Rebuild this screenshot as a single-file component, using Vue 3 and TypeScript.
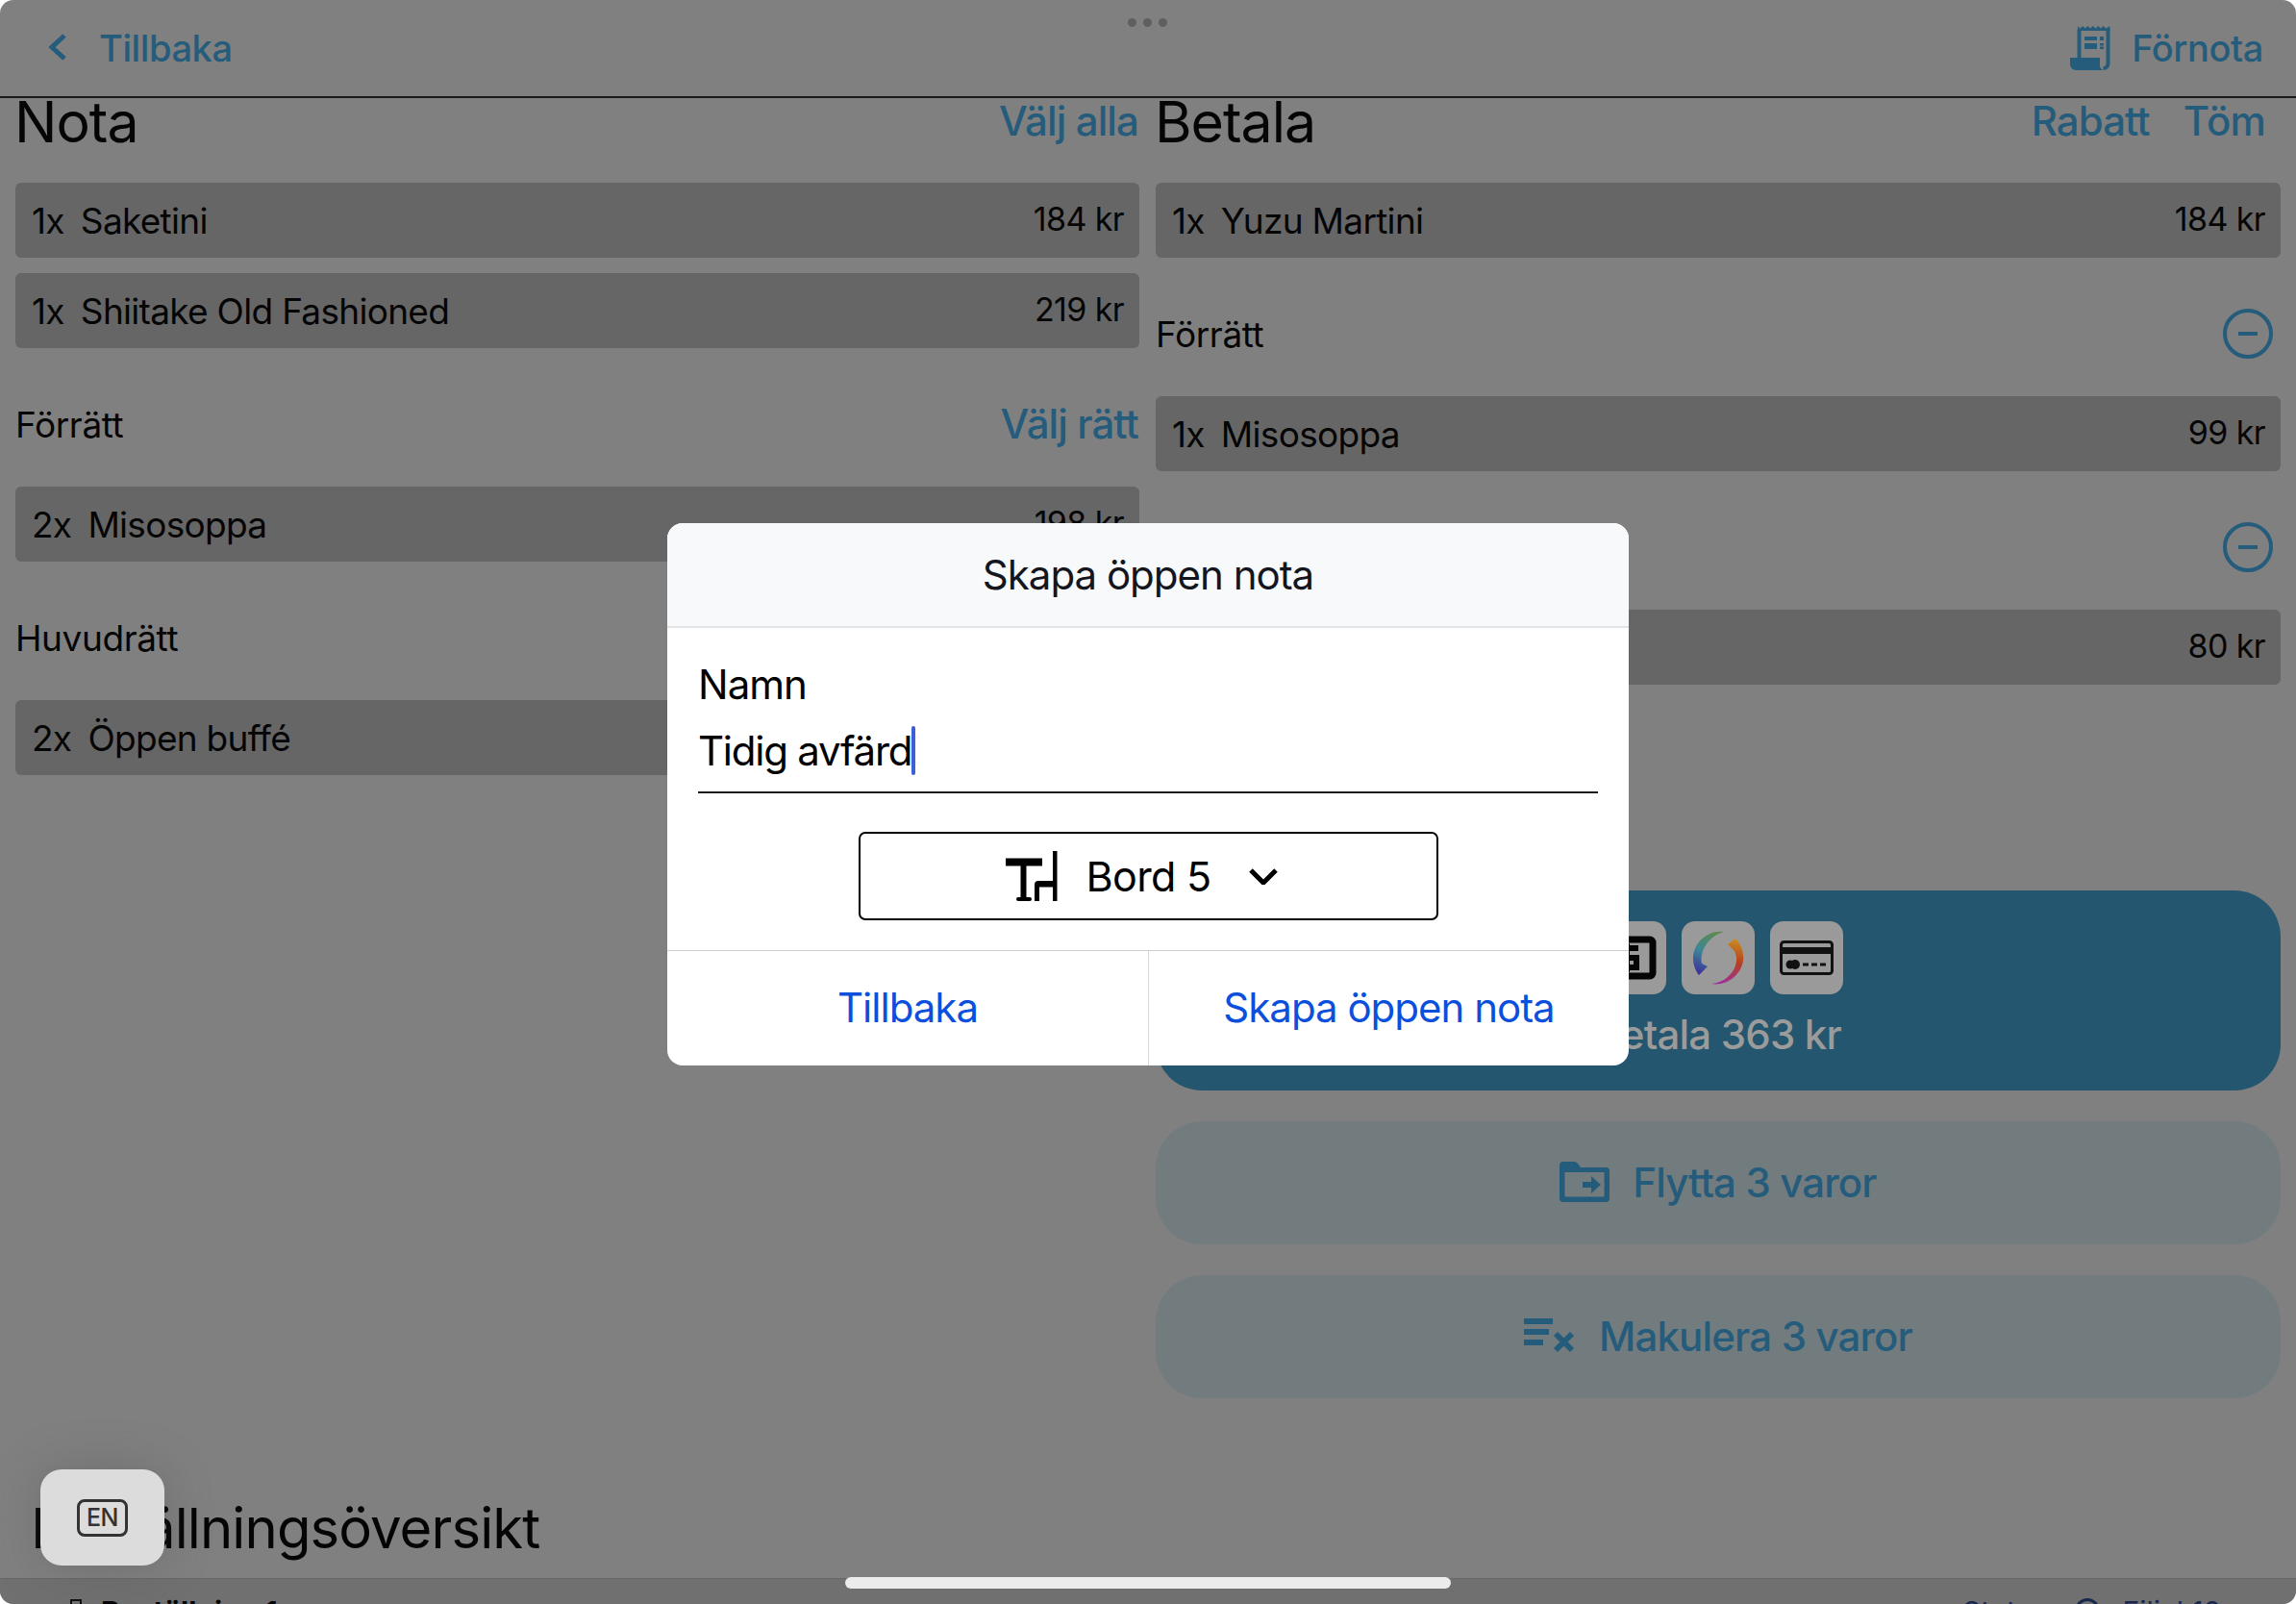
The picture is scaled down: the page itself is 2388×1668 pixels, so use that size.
<script setup lang="ts">
interface Line { qty: string; name: string; price?: string }
interface Group { title?: string; action?: 'pick' | 'minus'; lines: Line[] }

const left: Group[] = [
  { lines: [
    { qty: '1x', name: 'Saketini', price: '184 kr' },
    { qty: '1x', name: 'Shiitake Old Fashioned', price: '219 kr' },
  ] },
  { title: 'Förrätt', action: 'pick', lines: [{ qty: '2x', name: 'Misosoppa', price: '198 kr' }] },
  { title: 'Huvudrätt', action: 'pick', lines: [{ qty: '2x', name: 'Öppen buffé', price: '320 kr' }] },
]
const right: Group[] = [
  { lines: [{ qty: '1x', name: 'Yuzu Martini', price: '184 kr' }] },
  { title: 'Förrätt', action: 'minus', lines: [{ qty: '1x', name: 'Misosoppa', price: '99 kr' }] },
  { title: 'Huvudrätt', action: 'minus', lines: [{ qty: '1x', name: 'Öppen buffé', price: '80 kr' }] },
]
const columns = [
  { key: 'nota', title: 'Nota', actions: ['Välj alla'], groups: left },
  { key: 'betala', title: 'Betala', actions: ['Rabatt', 'Töm'], groups: right },
]
</script>

<template>
  <div class="screen">
    <header class="topbar">
      <div class="back">
        <svg class="chev" viewBox="0 0 20 30"><path d="M17 3 4 15l13 12" /></svg>
        <span>Tillbaka</span>
      </div>
      <div class="prebill">
        <svg class="receipt" viewBox="0 0 42 46">
          <path class="r-sheet" d="M9.500 3.500v31M39.500 3.500V39a5 5 0 0 1-5 5" />
          <path class="r-solid" d="M8 0l2.500 2.500L13 0l2.700 2.500L18.400 0l2.700 2.500L23.800 0l2.700 2.500L29.200 0l2.700 2.500L34.600 0l2.700 2.500L41.500 0v5H8z" />
          <path class="r-solid" d="M0 33h31v7a6 6 0 0 0 3.500 6H6a6 6 0 0 1-6-6z" />
          <path class="r-solid" d="M15 11h13v4H15zM31 11h4v4h-4zM15 18h13v6H15zM31 18h4v2.500h-4zM31 21.500h4V24h-4z" />
        </svg>
        <span>Förnota</span>
      </div>
    </header>
    <div class="dots"><i></i><i></i><i></i></div>

    <main class="content">
      <div class="columns">
        <section v-for="col in columns" :key="col.key" class="column">
          <div class="col-head">
            <h1>{{ col.title }}</h1>
            <div class="col-actions">
              <span v-for="a in col.actions" :key="a">{{ a }}</span>
            </div>
          </div>
          <div v-for="(g, i) in col.groups" :key="i" class="group">
            <div v-if="g.title" class="group-head">
              <span>{{ g.title }}</span>
              <span v-if="g.action === 'pick'" class="pick">Välj rätt</span>
              <svg v-else class="minus" viewBox="0 0 52 52">
                <circle cx="26" cy="26" r="24" />
                <path d="M16 26h20" />
              </svg>
            </div>
            <div class="lines">
              <div v-for="l in g.lines" :key="l.name" class="line">
                <span class="qty">{{ l.qty }}</span>
                <span class="name">{{ l.name }}</span>
                <span class="price">{{ l.price }}</span>
              </div>
            </div>
          </div>
          <div v-if="col.key === 'betala'" class="pay-actions">
            <div class="pay">
              <div class="methods">
                <div class="method">
                  <svg class="cash" viewBox="0 0 56 46">
                    <rect x="4" y="4" width="48" height="38" rx="3" />
                    <path class="cash-s" d="M37 13H25v10h10v10H20M25 8v30" />
                  </svg>
                </div>
                <div class="method">
                  <svg class="swish" viewBox="0 0 54 56">
                    <defs>
                      <linearGradient id="swl" x1="0.6" y1="0" x2="0.3" y2="1">
                        <stop offset="0" stop-color="#5c8a4e" />
                        <stop offset="0.5" stop-color="#3b8698" />
                        <stop offset="1" stop-color="#3d2f9a" />
                      </linearGradient>
                      <linearGradient id="swr" x1="0.5" y1="0" x2="0.4" y2="1">
                        <stop offset="0" stop-color="#c98a1e" />
                        <stop offset="0.5" stop-color="#b73f22" />
                        <stop offset="1" stop-color="#9c2e9e" />
                      </linearGradient>
                    </defs>
                    <path fill="url(#swl)" d="M33 1C15 -1 0 13 1 30c.5 7 3 12 6 16l9-9-6-3C7 22 17 5 33 1z" />
                    <path fill="url(#swr)" d="M37 14l8-6c6 6 9 14 8 23-2 15-18 27-33 24 15-1 27-14 26-27-.5-5-2-8-5-10z" />
                  </svg>
                </div>
                <div class="method">
                  <svg class="card" viewBox="0 0 56 36">
                    <rect x="1.500" y="1.500" width="53" height="33" rx="3" class="c-box" />
                    <rect x="2" y="7" width="52" height="7" class="c-fill" />
                    <circle cx="11" cy="25" r="4.500" class="c-fill" />
                    <circle cx="16" cy="25" r="5" class="c-fill" />
                    <path class="c-dash" d="M24 25h6m3 0h6m3 0h6" />
                  </svg>
                </div>
              </div>
              <span class="pay-label">Betala 363 kr</span>
            </div>
            <div class="soft">
              <svg class="folder" viewBox="0 0 52 42">
                <path class="f-solid" d="M0 4a4 4 0 0 1 4-4h11c2 0 3 1 4 2l3 4h26a4 4 0 0 1 4 4v28a4 4 0 0 1-4 4H4a4 4 0 0 1-4-4z" />
                <rect x="5.500" y="11" width="41" height="25.500" class="f-hole" />
                <path class="f-solid" d="M24 21h9v-6l10 9-10 9v-6h-9z" />
              </svg>
              <span>Flytta 3 varor</span>
            </div>
            <div class="soft">
              <svg class="voidico" viewBox="0 0 54 36">
                <path d="M0 3h30M0 14h26M0 25h20M33 16l17 17M50 16 33 33" />
              </svg>
              <span>Makulera 3 varor</span>
            </div>
          </div>
        </section>
      </div>
      <h2 class="overview">Beställningsöversikt</h2>
    </main>

    <footer class="bottombar">
      <div class="bb-left">
        <span class="bb-icon"></span>
        <strong>Beställning 1</strong>
      </div>
      <div class="bb-right">
        <span>Status</span>
        <span class="bb-circle"></span>
        <span>Filial 12</span>
      </div>
    </footer>

    <div class="scrim">
      <div class="modal">
        <div class="m-title">Skapa öppen nota</div>
        <div class="m-body">
          <div class="m-label">Namn</div>
          <div class="m-input">
            <span>Tidig avfärd</span><i class="caret"></i>
          </div>
          <div class="m-select">
            <svg class="table" viewBox="0 0 54 52">
              <rect x="0" y="7.500" width="38" height="8" />
              <rect x="15.500" y="15" width="6" height="35" />
              <rect x="11" y="48" width="16" height="4" rx="2" />
              <rect x="49" y="0" width="4.500" height="52" />
              <path d="M30 52V35a4 4 0 0 1 4-4h19v6.500H35V52z" />
            </svg>
            <span>Bord 5</span>
            <svg class="chev-down" viewBox="0 0 30 18"><path d="M2 3l13 13L28 3" /></svg>
          </div>
        </div>
        <div class="m-foot">
          <div class="m-btn">Tillbaka</div>
          <div class="m-btn">Skapa öppen nota</div>
        </div>
      </div>
    </div>

    <div class="key">
      <div class="key-glyph">EN</div>
    </div>
    <div class="home"></div>
  </div>
</template>

<style scoped>
.screen {
  position: relative;
  width: 2388px;
  height: 1668px;
  overflow: hidden;
  background: #808080;
  border-radius: 14px;
  display: flex;
  flex-direction: column;
  font-family: Inter, "Liberation Sans", sans-serif;
  color: #050505;
  --blue: #265c7b;
}
.topbar {
  height: 100px;
  flex: none;
  box-sizing: content-box;
  border-bottom: 2px solid #1a1a1a;
  display: flex;
  justify-content: space-between;
  align-items: center;
  padding: 0 34px 0 50px;
  color: var(--blue);
  font-size: 38px;
  font-weight: 500;
  letter-spacing: -0.4px;
}
.back, .prebill { display: flex; align-items: center; }
.back { gap: 33px; }
.prebill { gap: 22px; }
.chev { width: 20px; height: 30px; fill: none; stroke: var(--blue); stroke-width: 5; margin-top: -2px; }
.receipt { width: 42px; height: 46px; }
.r-sheet { fill: none; stroke: var(--blue); stroke-width: 4; }
.r-solid { fill: var(--blue); }
.dots {
  position: absolute;
  top: 19px;
  left: 1173px;
  display: flex;
  gap: 7px;
}
.dots i { width: 9px; height: 9px; border-radius: 50%; background: #5f5f5f; }
.content { flex: 1; min-height: 0; display: flex; flex-direction: column; }
.columns {
  display: grid;
  grid-template-columns: 1169px 1170px;
  gap: 17px;
  padding: 0 16px;
  height: 1451px;
}
.column { min-width: 0; }
.col-head {
  height: 88px;
  display: flex;
  justify-content: space-between;
  align-items: flex-start;
}
.col-head h1 {
  margin: -6px 0 0 -1px;
  font-size: 59px;
  font-weight: 400;
  height: 60px;
  display: flex;
  align-items: center;
  letter-spacing: -1px;
}
.col-actions {
  display: flex;
  gap: 35px;
  color: var(--blue);
  font-size: 42px;
  line-height: 50px;
  margin-top: -1px;
  padding-right: 1px;
  font-weight: 500;
  letter-spacing: -0.9px;
}
.column:last-child .col-actions { padding-right: 16px; }
.group-head {
  height: 144px;
  box-sizing: border-box;
  padding-top: 56px;
  display: flex;
  justify-content: space-between;
  align-items: flex-start;
  font-size: 37px;
  line-height: 48px;
  letter-spacing: -0.4px;
}
.pick { color: var(--blue); font-size: 42px; font-weight: 500; letter-spacing: -0.9px; margin: -1px 1px 0 0; }
.minus { width: 52px; height: 52px; margin: -3px 8px 0 0; fill: none; stroke: var(--blue); stroke-width: 4; }
.lines { display: flex; flex-direction: column; gap: 16px; }
.line {
  height: 78px;
  box-sizing: border-box;
  background: #666;
  border-radius: 6px;
  padding: 0 16px 0 17px;
  display: flex;
  align-items: center;
  font-size: 37px;
  letter-spacing: -0.7px;
}
.qty { margin-right: 17px; flex: none; }
.name { flex: 1; }
.price { font-size: 34px; margin-bottom: 4px; letter-spacing: -0.6px; }
.pay-actions {
  margin-top: 214px;
  display: flex;
  flex-direction: column;
  gap: 32px;
}
.pay {
  height: 208px;
  background: #25566f;
  border-radius: 48px;
  display: flex;
  flex-direction: column;
  align-items: center;
  box-sizing: border-box;
  padding-top: 32px;
  gap: 16px;
}
.methods { display: flex; gap: 16px; }
.method {
  width: 76px;
  height: 76px;
  border-radius: 14px;
  background: #9a9a9a;
  display: flex;
  align-items: center;
  justify-content: center;
}
.cash { width: 56px; height: 46px; fill: none; stroke: #050505; stroke-width: 7; }
.cash-s { stroke-width: 6; }
.swish { width: 54px; height: 56px; }
.card { width: 56px; height: 36px; }
.c-box { fill: none; stroke: #111; stroke-width: 3; }
.c-fill { fill: #111; }
.c-dash { fill: none; stroke: #111; stroke-width: 3; }
.pay-label { color: #9b9b9b; font-size: 42px; font-weight: 500; line-height: 52px; letter-spacing: -0.8px; }
.soft {
  height: 128px;
  box-sizing: border-box;
  padding-bottom: 2px;
  background: #727b7e;
  border-radius: 48px;
  display: flex;
  align-items: center;
  justify-content: center;
  gap: 24px;
  color: var(--blue);
  font-size: 42px;
  font-weight: 500;
  letter-spacing: -0.85px;
}
.folder { width: 52px; height: 42px; }
.f-solid { fill: var(--blue); }
.f-hole { fill: #727b7e; }
.voidico { width: 54px; height: 36px; fill: none; stroke: var(--blue); stroke-width: 6; }
.overview {
  margin: 0;
  padding-left: 32px;
  height: 85px;
  font-size: 58px;
  line-height: 72px;
  font-weight: 400;
  letter-spacing: -0.9px;
}
.bottombar {
  height: 27px;
  flex: none;
  background: #707070;
  border-top: 1px solid #686868;
  box-sizing: border-box;
  display: flex;
  justify-content: space-between;
  overflow: hidden;
  padding: 14px 78px 0 73px;
  font-size: 30px;
  line-height: 40px;
}
.bb-left, .bb-right { display: flex; align-items: flex-start; }
.bb-left { gap: 20px; }
.bb-right { gap: 23px; color: #17284f; }
.bb-icon { width: 8px; height: 30px; margin-top: 7px; border: 2px solid #111; }
.bb-circle { width: 26px; height: 26px; box-sizing: border-box; border: 3px solid #17284f; border-radius: 50%; margin: 6px 0 0 5px; }
.scrim {
  position: absolute;
  inset: 0;
  display: flex;
  align-items: center;
  justify-content: center;
  padding-bottom: 16px;
}
.modal {
  width: 1000px;
  height: 564px;
  background: #fff;
  border-radius: 16px;
  overflow: hidden;
  display: flex;
  flex-direction: column;
}
.m-title {
  height: 109px;
  flex: none;
  box-sizing: border-box;
  background: #f8f9fb;
  border-bottom: 2px solid #e3e4e6;
  display: flex;
  align-items: center;
  justify-content: center;
  font-size: 42px;
  letter-spacing: -1px;
  color: #14161d;
}
.m-body { flex: 1; padding: 35px 32px 0; }
.m-label { font-size: 42px; line-height: 48px; letter-spacing: -1px; color: #000; }
.m-input {
  margin-top: 21px;
  height: 66px;
  border-bottom: 2px solid #1c1c1c;
  display: flex;
  align-items: flex-start;
  font-size: 42px;
  line-height: 48px;
  letter-spacing: -1.25px;
  color: #000;
}
.caret { width: 4px; height: 51px; background: #3d60d8; margin: -2px 0 0 0; border-radius: 2px; }
.m-select {
  margin: 40px auto 0;
  width: 603px;
  height: 92px;
  box-sizing: border-box;
  border: 2px solid #000;
  border-radius: 7px;
  padding-right: 13px;
  display: flex;
  align-items: center;
  justify-content: center;
  font-size: 43px;
  letter-spacing: -0.7px;
  color: #000;
}
.table { width: 54px; height: 52px; fill: #000; margin: 0 30px 0 0; }
.chev-down { width: 30px; height: 18px; fill: none; stroke: #000; stroke-width: 5; margin-left: 40px; }
.m-foot {
  height: 119px;
  flex: none;
  border-top: 1px solid #cfcfcf;
  display: grid;
  grid-template-columns: 500px 500px;
}
.m-btn {
  display: flex;
  align-items: center;
  justify-content: center;
  padding-bottom: 3px;
  font-size: 42px;
  letter-spacing: -1px;
  color: #0b50dc;
}
.m-btn + .m-btn { border-left: 1px solid #d8d8d8; }
.key {
  position: absolute;
  left: 42px;
  top: 1528px;
  width: 129px;
  height: 100px;
  border-radius: 22px;
  background: #dcdcdc;
  box-shadow: 0 0 50px rgba(60, 70, 60, 0.28);
  display: flex;
  align-items: center;
  justify-content: center;
}
.key-glyph {
  width: 53px;
  height: 39px;
  box-sizing: border-box;
  border: 3px solid #333;
  border-radius: 8px;
  display: flex;
  align-items: center;
  justify-content: center;
  font-size: 25px;
  font-weight: 500;
  letter-spacing: -0.5px;
  color: #333;
}
.home {
  position: absolute;
  left: 879px;
  top: 1640px;
  width: 630px;
  height: 12px;
  border-radius: 6px;
  background: #ececec;
}
</style>

<style>
html, body { margin: 0; background: #fff; }
</style>
